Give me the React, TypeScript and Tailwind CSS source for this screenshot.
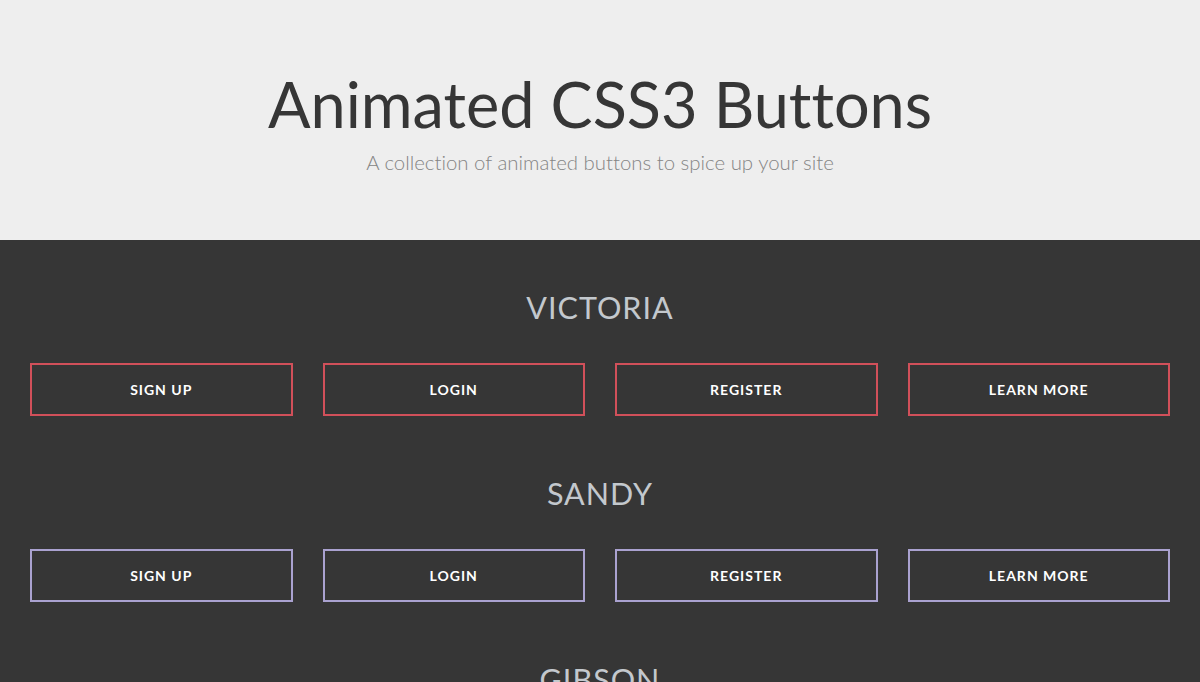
const labels = ['Sign up', 'Login', 'Register', 'Learn more']

const groups = [
  { name: 'Victoria', border: 'border-[#d1505a]' },
  { name: 'Sandy', border: 'border-[#aaa2d0]' },
  { name: 'Gibson', border: 'border-[#5bb5c9]' },
]

export default function App() {
  return (
    <div className="min-h-screen bg-[#363636] font-['Lato',sans-serif] [font-variant-ligatures:none]">
      {/* Header */}
      <header className="h-[240px] bg-[#eeeeee] pt-[72px] text-center">
        <h1 className="text-[63px] leading-none font-normal text-[#363636]">
          Animated CSS3 Buttons
        </h1>
        <p className="mt-[13px] text-[20.4px] leading-[28px] font-light text-[#858585]">
          A collection of animated buttons to spice up your site
        </p>
      </header>

      {/* Button groups */}
      <main className="px-[30px] pt-[48px]">
        {groups.map((g) => (
          <section key={g.name} className="mb-[58px]">
            <h2 className="text-center text-[30.5px] leading-[38px] tracking-[1px] text-[#c3c8cd] uppercase">
              {g.name}
            </h2>
            <div className="mt-[37px] grid grid-cols-4 gap-[30px]">
              {labels.map((l) => (
                <button
                  key={l}
                  className={`h-[53px] border-2 ${g.border} bg-transparent text-[14px] font-bold tracking-[1px] text-white uppercase`}
                >
                  {l}
                </button>
              ))}
            </div>
          </section>
        ))}
      </main>
    </div>
  )
}
